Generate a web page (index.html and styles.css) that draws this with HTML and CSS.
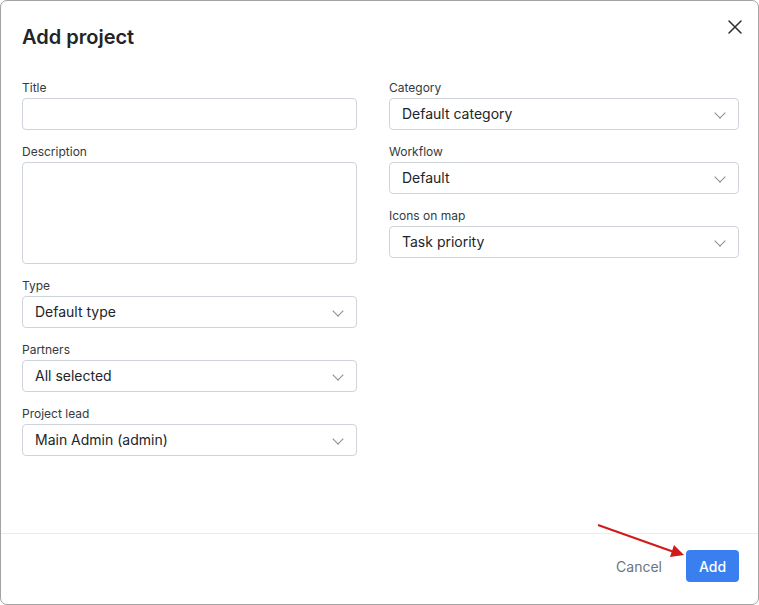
FILE: index.html
```html
<!DOCTYPE html>
<html lang="en">
  <head>
    <meta charset="UTF-8" />
    <title>Add project</title>
    <link rel="stylesheet" href="styles.css">
  </head>
  <body>
    <div class="modal">
      <div class="modal-header">
        <h1>Add project</h1>
        <button class="close-btn" aria-label="Close">
          <svg width="14" height="14" viewBox="0 0 14 14">
            <path d="M1 1 L13 13 M13 1 L1 13" stroke="#2b2f33" stroke-width="1.5" stroke-linecap="round" fill="none" />
          </svg>
        </button>
      </div>

      <div class="modal-body">
        <div class="column left">
          <div class="field">
            <label for="title">Title</label>
            <input type="text" id="title" />
          </div>
          <div class="field">
            <label for="description">Description</label>
            <textarea id="description"></textarea>
          </div>
          <div class="field">
            <label>Type</label>
            <div class="select">Default type</div>
          </div>
          <div class="field">
            <label>Partners</label>
            <div class="select">All selected</div>
          </div>
          <div class="field">
            <label>Project lead</label>
            <div class="select">Main Admin (admin)</div>
          </div>
        </div>

        <div class="column right">
          <div class="field">
            <label>Category</label>
            <div class="select">Default category</div>
          </div>
          <div class="field">
            <label>Workflow</label>
            <div class="select">Default</div>
          </div>
          <div class="field">
            <label>Icons on map</label>
            <div class="select">Task priority</div>
          </div>
        </div>
      </div>

      <div class="modal-footer">
        <button class="cancel-btn">Cancel</button>
        <button class="add-btn">Add</button>
      </div>

      <!-- annotation arrow pointing at the Add button -->
      <svg class="pointer" width="100" height="45" viewBox="0 0 100 45">
        <line x1="2" y1="2" x2="78" y2="29" stroke="#d0191b" stroke-width="2" />
        <polygon points="88,32 74,34 78,22" fill="#d0191b" />
      </svg>
    </div>
  </body>
</html>
```

FILE: styles.css
```css
* {
  box-sizing: border-box;
}

body {
  margin: 0;
  font-family: Inter, "Noto Sans", Arial, sans-serif;
  background: #ffffff;
  color: #212529;
}

.modal {
  position: relative;
  height: 605px;
  width: 759px;
  border: 1px solid #a3a3a3;
  border-radius: 7px;
  background: #ffffff;
  display: flex;
  flex-direction: column;
}

.modal-header {
  display: flex;
  justify-content: space-between;
  align-items: flex-start;
  padding: 23px 16px 0 21px;
  height: 79px;
}

.modal-header h1 {
  margin: 0;
  font-size: 20px;
  font-weight: 600;
  line-height: 26px;
  color: #212529;
}

.close-btn {
  background: none;
  border: none;
  padding: 0;
  margin-top: -4px;
  cursor: pointer;
}

.modal-body {
  flex: 1;
  display: grid;
  grid-template-columns: 335px 350px;
  column-gap: 32px;
  align-items: start;
  padding: 0 20px 0 21px;
}

.field {
  margin-bottom: 14px;
}

label {
  display: block;
  font-size: 12px;
  line-height: 16px;
  color: #343a40;
  margin-bottom: 2px;
}

input,
textarea,
.select {
  display: block;
  width: 100%;
  border: 1px solid #ced4da;
  border-radius: 4px;
  background: #ffffff;
  font-family: inherit;
}

input {
  height: 32px;
}

textarea {
  height: 102px;
  resize: none;
}

.select {
  position: relative;
  height: 32px;
  line-height: 30px;
  padding-left: 12px;
  font-size: 14px;
  color: #212529;
}

.select::after {
  content: "";
  position: absolute;
  right: 14px;
  top: 10px;
  width: 7px;
  height: 7px;
  border-right: 1px solid #868e96;
  border-bottom: 1px solid #868e96;
  transform: rotate(45deg);
}

.modal-footer {
  border-top: 1px solid #e9ecef;
  display: flex;
  justify-content: flex-end;
  align-items: center;
  gap: 16px;
  padding: 16px 19px 22px 0;
}

.cancel-btn {
  background: none;
  border: none;
  font-family: inherit;
  font-size: 14px;
  color: #6c757d;
  padding: 0 8px;
  height: 32px;
}

.add-btn {
  background: #3a7ff0;
  color: #ffffff;
  border: none;
  border-radius: 4px;
  font-family: inherit;
  font-size: 14px;
  font-weight: 500;
  height: 32px;
  width: 53px;
}

.pointer {
  position: absolute;
  left: 595px;
  top: 522px;
}
```
